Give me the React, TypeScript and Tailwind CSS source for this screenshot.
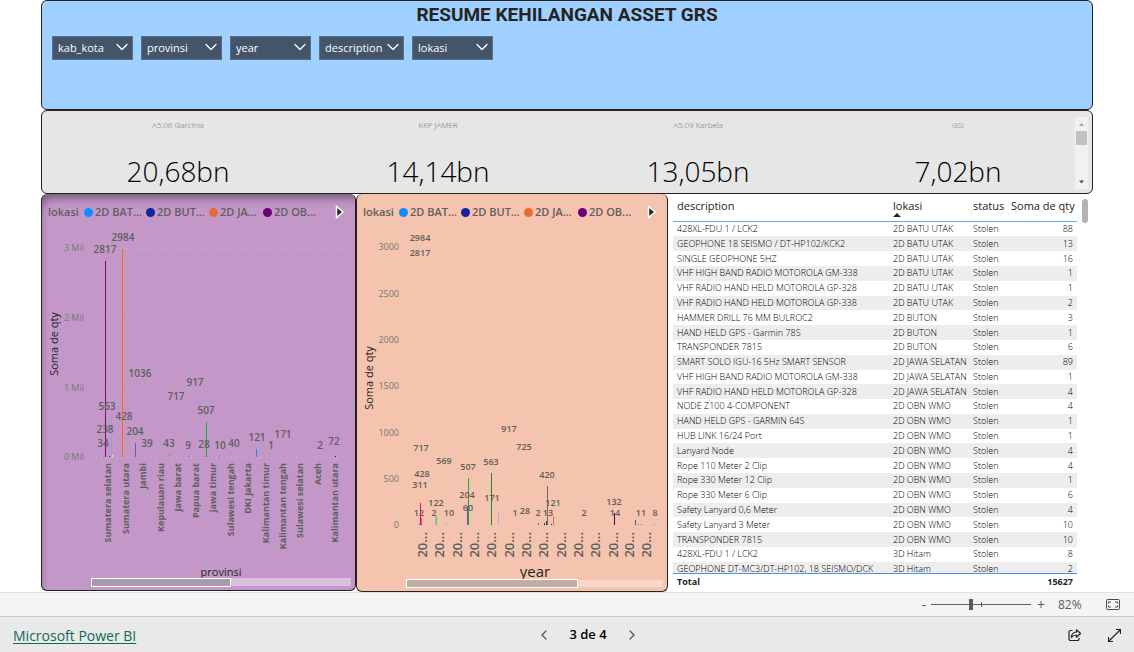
import { useState } from "react";
import { ChevronDown, ChevronLeft, ChevronRight } from "lucide-react";

type Bar = { x: number; top: number; color: string };
type Label = { x: number; y: number; text: string };
type Tick = { y: number; text: string };

const slicers = [
  { name: "kab_kota", width: "w-[81px]" },
  { name: "provinsi", width: "w-[81px]" },
  { name: "year", width: "w-[81px]" },
  { name: "description", width: "w-[85px]" },
  { name: "lokasi", width: "w-[81px]" },
];

const cards = [
  { label: "A5.08 Garcinia", value: "20,68bn" },
  { label: "KKP JAMER", value: "14,14bn" },
  { label: "A5.09 Karbela", value: "13,05bn" },
  { label: "GSI", value: "7,02bn" },
];

const legend = [
  { text: "2D BAT...", dot: "bg-[#118dff]", width: "w-[62px]" },
  { text: "2D BUT...", dot: "bg-[#12239e]", width: "w-[63px]" },
  { text: "2D JA...", dot: "bg-[#e66c37]", width: "w-[54px]" },
  { text: "2D OB...", dot: "bg-[#6b007b]", width: "w-[56px]" },
];

const rows: [string, string, number][] = [
  ["428XL-FDU 1 / LCK2", "2D BATU UTAK", 88],
  ["GEOPHONE 18 SEISMO / DT-HP102/KCK2", "2D BATU UTAK", 13],
  ["SINGLE GEOPHONE 5HZ", "2D BATU UTAK", 16],
  ["VHF HIGH BAND RADIO MOTOROLA GM-338", "2D BATU UTAK", 1],
  ["VHF RADIO HAND HELD MOTOROLA GP-328", "2D BATU UTAK", 1],
  ["VHF RADIO HAND HELD MOTOROLA GP-338", "2D BATU UTAK", 2],
  ["HAMMER DRILL 76 MM BULROC2", "2D BUTON", 3],
  ["HAND HELD GPS - Garmin 78S", "2D BUTON", 1],
  ["TRANSPONDER 7815", "2D BUTON", 6],
  ["SMART SOLO IGU-16 5Hz SMART SENSOR", "2D JAWA SELATAN", 89],
  ["VHF HIGH BAND RADIO MOTOROLA GM-338", "2D JAWA SELATAN", 1],
  ["VHF RADIO HAND HELD MOTOROLA GP-328", "2D JAWA SELATAN", 4],
  ["NODE Z100 4-COMPONENT", "2D OBN WMO", 4],
  ["HAND HELD GPS - GARMIN 64S", "2D OBN WMO", 1],
  ["HUB LINK 16/24 Port", "2D OBN WMO", 1],
  ["Lanyard Node", "2D OBN WMO", 4],
  ["Rope 110 Meter 2 Clip", "2D OBN WMO", 4],
  ["Rope 330 Meter 12 Clip", "2D OBN WMO", 1],
  ["Rope 330 Meter 6 Clip", "2D OBN WMO", 6],
  ["Safety Lanyard 0,6 Meter", "2D OBN WMO", 4],
  ["Safety Lanyard 3 Meter", "2D OBN WMO", 10],
  ["TRANSPONDER 7815", "2D OBN WMO", 10],
  ["428XL-FDU 1 / LCK2", "3D Hitam", 8],
  ["GEOPHONE DT-MC3/DT-HP102, 18 SEISMO/DCK", "3D Hitam", 2],
];

const provinceTicks: Tick[] = [
  { y: 18, text: "3 Mil" },
  { y: 88, text: "2 Mil" },
  { y: 158, text: "1 Mil" },
  { y: 227, text: "0 Mil" },
];

const provinceBars: Bar[] = [
  { x: 61, top: 226, color: "#c19c00" },
  { x: 63, top: 31, color: "#8b007b" },
  { x: 67, top: 226, color: "#c40000" },
  { x: 69, top: 188, color: "#8f9fe8" },
  { x: 70, top: 225, color: "#f5e0b0" },
  { x: 80, top: 19, color: "#ff6a00" },
  { x: 93, top: 213, color: "#744ec2" },
  { x: 127, top: 224, color: "#e66c37" },
  { x: 146, top: 226, color: "#d64550" },
  { x: 162, top: 225, color: "#e66c37" },
  { x: 164, top: 192, color: "#1aab40" },
  { x: 177, top: 226, color: "#8a8a60" },
  { x: 214, top: 219, color: "#118dff" },
  { x: 230, top: 226, color: "#9aa860" },
  { x: 293, top: 226, color: "#3a0a50" },
];

const provinceLabels: Label[] = [
  { x: 81, y: 11, text: "2984" },
  { x: 63, y: 23, text: "2817" },
  { x: 98, y: 147, text: "1036" },
  { x: 153, y: 156, text: "917" },
  { x: 134, y: 170, text: "717" },
  { x: 65, y: 180, text: "563" },
  { x: 82, y: 190, text: "428" },
  { x: 164, y: 184, text: "507" },
  { x: 63, y: 203, text: "238" },
  { x: 93, y: 205, text: "204" },
  { x: 61, y: 217, text: "34" },
  { x: 105, y: 217, text: "39" },
  { x: 127, y: 217, text: "43" },
  { x: 146, y: 219, text: "9" },
  { x: 162, y: 218, text: "28" },
  { x: 178, y: 219, text: "10" },
  { x: 192, y: 217, text: "40" },
  { x: 215, y: 211, text: "121" },
  { x: 229, y: 219, text: "1" },
  { x: 241, y: 208, text: "171" },
  { x: 278, y: 219, text: "2" },
  { x: 292, y: 215, text: "72" },
];

const provinces: { x: number; name: string }[] = [
  { x: 66, name: "Sumatera selatan" },
  { x: 84, name: "Sumatera utara" },
  { x: 101, name: "Jambi" },
  { x: 119, name: "Kepulauan riau" },
  { x: 136, name: "Jawa barat" },
  { x: 154, name: "Papua barat" },
  { x: 171, name: "jawa timur" },
  { x: 189, name: "Sulawesi tengah" },
  { x: 206, name: "DKI Jakarta" },
  { x: 224, name: "Kalimantan timur" },
  { x: 241, name: "Kalimantan tengah" },
  { x: 258, name: "Sulawesi selatan" },
  { x: 276, name: "Aceh" },
  { x: 293, name: "Kalimantan utara" },
];

const yearTicks: Tick[] = [
  { y: 17, text: "3000" },
  { y: 64, text: "2500" },
  { y: 110, text: "2000" },
  { y: 156, text: "1500" },
  { y: 203, text: "1000" },
  { y: 249, text: "500" },
  { y: 295, text: "0" },
];

const yearBars: Bar[] = [
  { x: 62, top: 294, color: "#118dff" },
  { x: 63, top: 273, color: "#e3008c" },
  { x: 64, top: 288, color: "#ff4a5a" },
  { x: 78, top: 287, color: "#9fb0f0" },
  { x: 79, top: 286, color: "#4bd85a" },
  { x: 89, top: 293, color: "#9fb8f5" },
  { x: 110, top: 276, color: "#744ec2" },
  { x: 111, top: 248, color: "#1aab40" },
  { x: 134, top: 243, color: "#1f8a2a" },
  { x: 141, top: 281, color: "#a9b4f0" },
  { x: 181, top: 293, color: "#118dff" },
  { x: 187, top: 293, color: "#5b1240" },
  { x: 189, top: 291, color: "#0d5c20" },
  { x: 190, top: 256, color: "#6b6b70" },
  { x: 194, top: 294, color: "#12239e" },
  { x: 196, top: 286, color: "#e66c37" },
  { x: 257, top: 283, color: "#3a0a50" },
  { x: 278, top: 290, color: "#3a50b5" },
  { x: 281, top: 294, color: "#8a8a60" },
  { x: 284, top: 294, color: "#d64550" },
  { x: 297, top: 294, color: "#5f8f8f" },
];

const yearLabels: Label[] = [
  { x: 63, y: 11, text: "2984" },
  { x: 63, y: 26, text: "2817" },
  { x: 152, y: 202, text: "917" },
  { x: 64, y: 221, text: "717" },
  { x: 167, y: 220, text: "725" },
  { x: 87, y: 234, text: "569" },
  { x: 111, y: 240, text: "507" },
  { x: 134, y: 235, text: "563" },
  { x: 65, y: 247, text: "428" },
  { x: 63, y: 258, text: "311" },
  { x: 190, y: 248, text: "420" },
  { x: 79, y: 276, text: "122" },
  { x: 110, y: 268, text: "204" },
  { x: 135, y: 271, text: "171" },
  { x: 196, y: 276, text: "121" },
  { x: 257, y: 275, text: "132" },
  { x: 62, y: 286, text: "12" },
  { x: 77, y: 286, text: "2" },
  { x: 92, y: 286, text: "10" },
  { x: 111, y: 281, text: "60" },
  { x: 158, y: 286, text: "1" },
  { x: 168, y: 284, text: "28" },
  { x: 181, y: 286, text: "2" },
  { x: 191, y: 286, text: "13" },
  { x: 227, y: 286, text: "2" },
  { x: 258, y: 286, text: "14" },
  { x: 284, y: 286, text: "11" },
  { x: 298, y: 286, text: "8" },
];

const yearSlots = [66, 83, 101, 118, 135, 153, 170, 187, 205, 222, 239, 257, 273, 290];

function Legend() {
  return (
    <div className="flex h-9 items-center pl-1.5 text-[11px] font-semibold text-[#605e5c]">
      <span className="w-9 shrink-0">lokasi</span>
      {legend.map((item) => (
        <span
          key={item.text}
          className={`flex shrink-0 items-center gap-0.5 whitespace-nowrap ${item.width}`}
        >
          <i className={`h-[9px] w-[9px] shrink-0 rounded-full ${item.dot}`} />
          {item.text}
        </span>
      ))}
      <button aria-label="Next legend items" className="mr-2.5 ml-auto">
        <svg width="10" height="14" viewBox="0 0 10 14">
          <path d="M1.500 1.500v11l6.500-5.500z" fill="#252423" stroke="#fff" strokeWidth="1.5" />
        </svg>
      </button>
    </div>
  );
}

function Grid({ ticks, left, right }: { ticks: Tick[]; left: number; right: number }) {
  return (
    <>
      {ticks.map((tick) => (
        <g key={tick.text}>
          <line
            x1={left}
            x2={right}
            y1={tick.y + 0.5}
            y2={tick.y + 0.5}
            stroke="#c8c8c8"
            strokeOpacity="0.7"
            strokeDasharray="1 4"
          />
          <text
            x={left - 7}
            y={tick.y + 3}
            textAnchor="end"
            className="fill-[#777] text-[9px]"
          >
            {tick.text}
          </text>
        </g>
      ))}
    </>
  );
}

function Bars({ bars, base }: { bars: Bar[]; base: number }) {
  return (
    <>
      {bars.map((bar) => (
        <rect
          key={bar.x}
          x={bar.x}
          y={bar.top}
          width="1"
          height={base - bar.top}
          fill={bar.color}
        />
      ))}
    </>
  );
}

function DataLabels({ labels }: { labels: Label[] }) {
  return (
    <>
      {labels.map((label) => (
        <text key={`${label.x}-${label.y}`} x={label.x} y={label.y} textAnchor="middle">
          {label.text}
        </text>
      ))}
    </>
  );
}

function ProvinceChart() {
  return (
    <section className="h-[397px] overflow-hidden rounded-md border border-t-0 border-[#222] bg-[#c398c9] shadow-[inset_6px_12px_10px_-8px_rgba(0,0,0,0.4)]">
      <Legend />
      <svg viewBox="0 0 313 360" className="w-full" role="img" aria-label="Soma de qty por provinsi">
        <Grid ticks={provinceTicks} left={49} right={309} />
        <Bars bars={provinceBars} base={227} />
        <g className="fill-[#605e5c] text-[10px] font-semibold">
          <DataLabels labels={provinceLabels} />
        </g>
        <g className="fill-[#605e5c] text-[9px] font-bold">
          {provinces.map((p) => (
            <text
              key={p.name}
              transform={`translate(${p.x + 3} 233) rotate(-90)`}
              textAnchor="end"
            >
              {p.name}
            </text>
          ))}
        </g>
        <text
          transform="translate(16 114) rotate(-90)"
          textAnchor="middle"
          className="fill-[#252423] text-[11px]"
        >
          Soma de qty
        </text>
        <text x="179" y="346" textAnchor="middle" className="fill-[#252423] text-[11px]">
          provinsi
        </text>
        <rect x="49" y="348" width="260" height="8" fill="#fff" fillOpacity="0.4" />
        <rect x="49.5" y="348.5" width="139" height="8" fill="#aa9aad" stroke="#fff" />
      </svg>
    </section>
  );
}

function YearChart() {
  return (
    <section className="h-[398px] overflow-hidden rounded-md border border-t-0 border-[#222] bg-[#f4c4ae]">
      <Legend />
      <svg viewBox="0 0 310 360" className="w-full" role="img" aria-label="Soma de qty por year">
        <Grid ticks={yearTicks} left={49} right={304} />
        <Bars bars={yearBars} base={295} />
        <g className="fill-[#605e5c] text-[9px] font-semibold">
          <DataLabels labels={yearLabels} />
        </g>
        <g className="fill-[#605e5c] text-[13px] font-semibold">
          {yearSlots.map((x) => (
            <text key={x} transform={`translate(${x + 4} 302) rotate(-90)`} textAnchor="end">
              20...
            </text>
          ))}
        </g>
        <text
          transform="translate(16 148) rotate(-90)"
          textAnchor="middle"
          className="fill-[#252423] text-[11px]"
        >
          Soma de qty
        </text>
        <text x="178" y="347" textAnchor="middle" className="fill-[#252423] text-[15px]">
          year
        </text>
        <rect x="49" y="350" width="257" height="7" fill="#fff" fillOpacity="0.35" />
        <rect x="49.5" y="349.5" width="171" height="8" fill="#c2ada3" stroke="#fff" />
      </svg>
    </section>
  );
}

function AssetTable() {
  return (
    <section className="flex h-[397px] pl-[5px] text-[#252423]">
      <div className="min-w-0 flex-1">
        <div className="h-[380px] overflow-hidden border-b border-[#3a96ee]">
          <table className="h-[383px] w-full table-fixed border-collapse text-left text-[9px] leading-[14px]">
            <colgroup>
              <col />
              <col className="w-20" />
              <col className="w-[38px]" />
              <col className="w-[70px]" />
            </colgroup>
            <thead>
              <tr className="h-[27px] border-b border-[#5aaaf5] align-top text-[11px]">
                <th className="px-1 pt-[5px] font-normal">description</th>
                <th className="relative px-1 pt-[5px] font-normal">
                  lokasi
                  <svg width="8" height="4" viewBox="0 0 8 4" className="absolute top-[19px] left-1">
                    <path d="M0 4L4 0l4 4z" fill="#252423" />
                  </svg>
                </th>
                <th className="px-1 pt-[5px] font-normal">status</th>
                <th className="px-1 pt-[5px] text-right font-normal whitespace-nowrap">
                  Soma de qty
                </th>
              </tr>
            </thead>
            <tbody className="font-light text-black">
              {rows.map(([description, lokasi, qty], index) => (
                <tr key={index} className="even:bg-[#ededed]">
                  <td className="px-1 py-0 whitespace-nowrap">{description}</td>
                  <td className="px-1 py-0 whitespace-nowrap">{lokasi}</td>
                  <td className="px-1 py-0">Stolen</td>
                  <td className="px-1 py-0 text-right">{qty}</td>
                </tr>
              ))}
            </tbody>
          </table>
        </div>
        <div className="flex justify-between px-1 text-[9px] leading-4 font-bold">
          <span>Total</span>
          <span>15627</span>
        </div>
      </div>
      <div className="w-4 shrink-0 pt-[5px] pl-[5px]">
        <div className="h-6 w-1.5 rounded-full bg-[#b3b3b3]" />
      </div>
    </section>
  );
}

export default function App() {
  const [zoom, setZoom] = useState(40);

  return (
    <div className="flex min-h-screen flex-col bg-white font-['Open_Sans','Noto_Sans',sans-serif]">
      <main className="flex-1 px-[41px]">
        <header className="h-[110px] rounded-md border border-[#222] bg-[#a0d0ff] px-2.5">
          <h1 className="h-[35px] text-center font-[Roboto,sans-serif] text-[19px] leading-7 font-bold text-[#252423]">
            RESUME KEHILANGAN ASSET GRS
          </h1>
          <div className="flex items-start gap-2">
            {slicers.map((slicer) => (
              <div key={slicer.name} className={`relative flex h-6 ${slicer.width}`}>
                <select
                  aria-label={slicer.name}
                  className="h-6 w-full appearance-none border border-[#5a6d88] bg-[#44546a] pl-[5px] text-[11px] text-white"
                >
                  <option>{slicer.name}</option>
                </select>
                <ChevronDown
                  className="pointer-events-none absolute top-px right-px h-5 w-5 text-white"
                  strokeWidth={1.5}
                />
              </div>
            ))}
          </div>
        </header>

        <section className="relative h-[84px] rounded-md border border-[#222] bg-[#e6e6e6] pr-1 pl-1.5">
          <div className="grid grid-cols-4 pt-2 text-center">
            {cards.map((card) => (
              <div key={card.label}>
                <p className="text-[8px] leading-3 font-light text-[#707070]">{card.label}</p>
                <p className="mt-5 text-[28px] leading-10 font-light text-black">{card.value}</p>
              </div>
            ))}
          </div>
          <div className="absolute top-1.5 right-1 flex h-[72px] w-[13px] flex-col items-center bg-[#f1f1f1]">
            <svg width="13" height="14" viewBox="0 0 13 14">
              <path d="M4 9l2.500-3L9 9z" fill="#a3a3a3" />
            </svg>
            <div className="h-3.5 w-[11px] bg-[#c1c1c1]" />
            <svg width="13" height="14" viewBox="0 0 13 14" className="mt-auto">
              <path d="M4 5.500l2.500 3L9 5.500z" fill="#505050" />
            </svg>
          </div>
        </section>

        <div className="grid grid-cols-[315fr_312fr_425fr]">
          <ProvinceChart />
          <YearChart />
          <AssetTable />
        </div>
      </main>

      <div className="flex h-6 items-center justify-end border-t border-[#e1e1e1] bg-[#f4f4f4] pr-3.5 text-[#605e5c]">
        <button aria-label="Zoom out" className="w-3.5 text-[14px] leading-5">
          -
        </button>
        <div className="relative flex w-[100px] items-center">
          <input
            type="range"
            aria-label="Zoom"
            value={zoom}
            onChange={(e) => setZoom(Number(e.target.value))}
            className="h-3 w-full appearance-none bg-transparent [&::-webkit-slider-runnable-track]:h-px [&::-webkit-slider-runnable-track]:bg-[#605e5c] [&::-webkit-slider-thumb]:-mt-[5px] [&::-webkit-slider-thumb]:h-[11px] [&::-webkit-slider-thumb]:w-1 [&::-webkit-slider-thumb]:appearance-none [&::-webkit-slider-thumb]:bg-[#605e5c]"
          />
          <span className="absolute left-1/2 h-[5px] w-px bg-[#605e5c]" />
        </div>
        <button aria-label="Zoom in" className="w-5 text-[14px] leading-5">
          +
        </button>
        <span className="ml-[7px] w-9 text-[12px]">82%</span>
        <button aria-label="Fit to page" className="ml-3">
          <svg width="14" height="11" viewBox="0 0 14 11" fill="none" stroke="#4a4a4a">
            <rect x="0.500" y="0.500" width="13" height="10" rx="1" />
            <path d="M5 3H2.500v1.500M9 3h2.500v1.500M5 8H2.500V6.500M9 8h2.500V6.500" />
          </svg>
        </button>
      </div>

      <footer className="grid h-[37px] grid-cols-[1fr_auto_1fr] items-center border-t border-[#c8c8c8] bg-[#e9e9e9] px-[13px]">
        <a
          href="#"
          className="justify-self-start text-[14px] text-[#0f6a5b] underline underline-offset-2"
        >
          Microsoft Power BI
        </a>
        <nav className="flex items-center gap-[17px] pl-[42px] text-[13px] font-semibold text-black">
          <button aria-label="Previous page">
            <ChevronLeft className="h-4 w-4 text-[#44607a]" />
          </button>
          3 de 4
          <button aria-label="Next page">
            <ChevronRight className="h-4 w-4 text-[#44607a]" />
          </button>
        </nav>
        <div className="flex items-center gap-[27px] justify-self-end">
          <button aria-label="Share">
            <svg width="13" height="12" viewBox="0 0 13 12" fill="none" stroke="#222" strokeWidth="1.2" strokeLinejoin="round">
              <path d="M4.500 1.500H2.500a1.500 1.500 0 0 0-1.500 1.500v7a1.500 1.500 0 0 0 1.500 1.500h7A1.500 1.500 0 0 0 11 10V9" />
              <path d="M8.500.8l4 3.700-4 3.700V6C6 6 4.500 6.800 3.300 8.300 3.500 5.300 5.300 3.200 8.500 3z" />
            </svg>
          </button>
          <button aria-label="Full screen">
            <svg width="13" height="13" viewBox="0 0 13 13" fill="none" stroke="#222" strokeWidth="1.2">
              <path d="M.5 12.500l12-12M8 .5h4.500V5M.5 8v4.500H5" />
            </svg>
          </button>
        </div>
      </footer>
    </div>
  );
}
